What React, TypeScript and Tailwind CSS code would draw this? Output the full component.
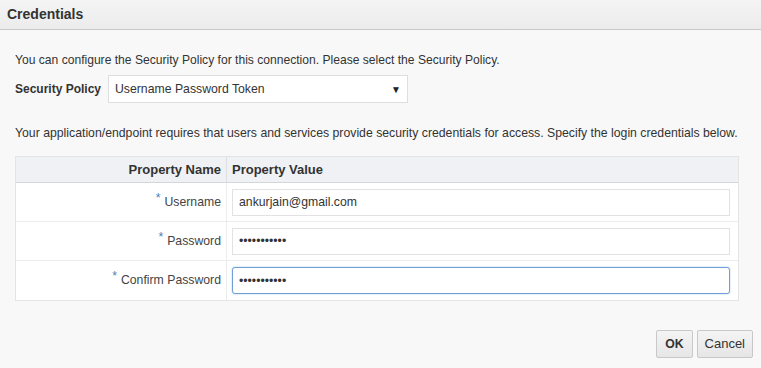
import React from 'react';

const rows = [
  { label: 'Username', value: 'ankurjain@gmail.com', type: 'text', focused: false },
  { label: 'Password', value: 'secretpass1', type: 'password', focused: false },
  { label: 'Confirm Password', value: 'secretpass1', type: 'password', focused: true },
];

export default function App() {
  return (
    <div
      className="w-[761px] h-[368px] bg-[#f8f8f8] text-[12.25px] text-[#333] flex flex-col overflow-hidden"
      style={{ fontFamily: '"Liberation Sans", Arial, sans-serif' }}
    >
      {/* Title bar */}
      <div className="h-[30px] shrink-0 bg-gradient-to-b from-[#f4f4f4] to-[#ececec] border-b border-[#c9c9c9] flex items-center px-[7px]">
        <h1 className="text-[14px] font-bold text-[#333]">Credentials</h1>
      </div>

      <div className="flex-1 flex flex-col px-[15px] pt-[23px]">
        <p className="leading-[14px] text-[12.1px]">You can configure the Security Policy for this connection. Please select the Security Policy.</p>

        {/* Security policy select */}
        <div className="flex items-center mt-[8px]">
          <span className="font-bold w-[93px] text-[12px]">Security Policy</span>
          <div className="w-[300px] h-[28px] bg-white border border-[#dedede] flex items-center justify-between pl-[6px] pr-[6px]">
            <span>Username Password Token</span>
            <span className="text-[10px] text-[#222]">▼</span>
          </div>
        </div>

        <p className="leading-[14px] mt-[23px]">
          Your application/endpoint requires that users and services provide security credentials for access. Specify the login credentials below.
        </p>

        {/* Credentials table */}
        <div className="w-[724px] mt-[16px] border border-[#e4e4e4] bg-white">
          <div className="flex h-[26px] bg-[#eff1f4] border-b border-[#d4d6d9] font-bold text-[#333] text-[13px]">
            <div className="w-[211px] pr-[5px] flex items-center justify-end border-r border-[#dcdee1]">Property Name</div>
            <div className="flex-1 pl-[5px] flex items-center">Property Value</div>
          </div>
          {rows.map((r, i) => (
            <div
              key={r.label}
              className={`flex h-[39px] ${i < rows.length - 1 ? 'border-b border-[#ececec]' : ''}`}
            >
              <div className="w-[211px] pr-[5px] flex items-center justify-end border-r border-[#ececec] text-[#444]">
                <span className="text-[#4a7fb5] mr-[4px] relative -top-[4px]">*</span>
                {r.label}
              </div>
              <div className="flex-1 flex items-center pl-[5px] pr-[8px]">
                <input
                  readOnly
                  type={r.type}
                  value={r.value}
                  className={`w-full h-[27px] px-[6px] bg-white text-[12.25px] text-[#333] outline-none ${
                    r.focused
                      ? 'border border-[#6f9fd6] rounded-[3px] shadow-[0_0_2px_#a9c6ea]'
                      : 'border border-[#e2e2e2]'
                  }`}
                  style={{ fontFamily: '"Liberation Sans", Arial, sans-serif' }}
                />
              </div>
            </div>
          ))}
        </div>

        {/* Buttons */}
        <div className="mt-auto mb-[10px] flex justify-end gap-[4px] -mr-[7px]">
          <button className="h-[28px] px-[8px] bg-gradient-to-b from-[#f4f4f4] to-[#e6e6e6] border border-[#c8c8c8] rounded-[2px] font-bold text-[#333]">
            OK
          </button>
          <button className="h-[28px] px-[7px] bg-gradient-to-b from-[#f4f4f4] to-[#e6e6e6] border border-[#c8c8c8] rounded-[2px] text-[13px] text-[#333]">
            Cancel
          </button>
        </div>
      </div>
    </div>
  );
}
